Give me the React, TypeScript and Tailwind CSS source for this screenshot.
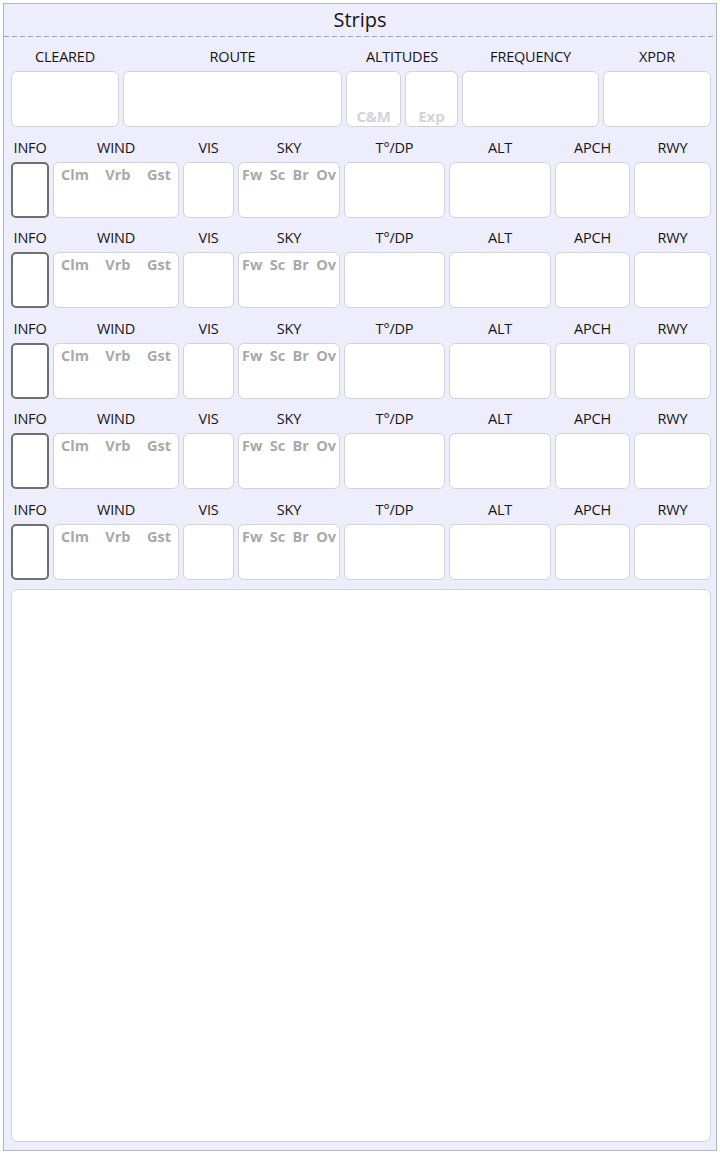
const font = { fontFamily: '"Open Sans", "Noto Sans", sans-serif' };

const box = "h-[56px] rounded-[6px] border border-[#d2d2d8] bg-white";

function Label({ text, span }: { text: string; span?: boolean }) {
  return (
    <div
      className={
        "h-[20px] pt-[2px] text-center text-[14.5px] leading-[18px] tracking-[-0.2px] text-[#151515] " +
        (span ? "col-span-2" : "")
      }
    >
      {text}
    </div>
  );
}

function Hint({ items, className }: { items: string[]; className?: string }) {
  return (
    <div
      className={
        "flex justify-between pt-[2px] text-[14.5px] font-bold leading-[20px] text-[#a9a9a9] " +
        (className ?? "")
      }
    >
      {items.map((t) => (
        <span key={t}>{t}</span>
      ))}
    </div>
  );
}

function WeatherRow() {
  return (
    <div className="mt-[9.5px] grid grid-cols-[38px_126px_51px_102px_101px_102px_75px_1fr] gap-x-[4px]">
      {["INFO", "WIND", "VIS", "SKY", "T°/DP", "ALT", "APCH", "RWY"].map((l) => (
        <Label key={l} text={l} />
      ))}
      <div className="mt-[5px] h-[56px] rounded-[5px] border-2 border-[#6f6f6f] bg-white" />
      <div className={"mt-[5px] " + box}>
        <Hint items={["Clm", "Vrb", "Gst"]} className="px-[7px]" />
      </div>
      <div className={"mt-[5px] " + box} />
      <div className={"mt-[5px] " + box}>
        <Hint items={["Fw", "Sc", "Br", "Ov"]} className="px-[3px]" />
      </div>
      <div className={"mt-[5px] " + box} />
      <div className={"mt-[5px] " + box} />
      <div className={"mt-[5px] " + box} />
      <div className={"mt-[5px] " + box} />
    </div>
  );
}

export default function App() {
  return (
    <div className="h-[1154px] w-[720px] bg-white p-[3px]" style={font}>
      <div className="flex h-full flex-col border border-[#b4b4c4] bg-[#ededfb]">
        <div className="flex h-[32px] items-center justify-center text-[20px] text-[#151515]">
          Strips
        </div>
        <div className="h-px bg-[repeating-linear-gradient(to_right,#a2a2b2_0_5px,transparent_5px_8px)]" />

        <div className="flex flex-1 flex-col pl-[7px] pr-[5px] pt-[9px]">
          <div className="grid grid-cols-[108px_219px_55px_53px_137px_1fr] gap-x-[4px]">
            <Label text="CLEARED" />
            <Label text="ROUTE" />
            <Label text="ALTITUDES" span />
            <Label text="FREQUENCY" />
            <Label text="XPDR" />
            <div className={"mt-[5px] " + box} />
            <div className={"mt-[5px] " + box} />
            <div className={"mt-[5px] flex items-end justify-center pb-[1px] " + box}>
              <span className="text-[15px] font-bold leading-[18px] tracking-[-0.3px] text-[#d3d3d8]">C&amp;M</span>
            </div>
            <div className={"mt-[5px] flex items-end justify-center pb-[1px] " + box}>
              <span className="text-[15px] font-bold leading-[18px] text-[#d3d3d8]">Exp</span>
            </div>
            <div className={"mt-[5px] " + box} />
            <div className={"mt-[5px] " + box} />
          </div>

          <WeatherRow />
          <WeatherRow />
          <WeatherRow />
          <WeatherRow />
          <WeatherRow />

          <div className="mb-[8px] mt-[9px] flex-1 rounded-[6px] border border-[#d2d2d8] bg-white" />
        </div>
      </div>
    </div>
  );
}
